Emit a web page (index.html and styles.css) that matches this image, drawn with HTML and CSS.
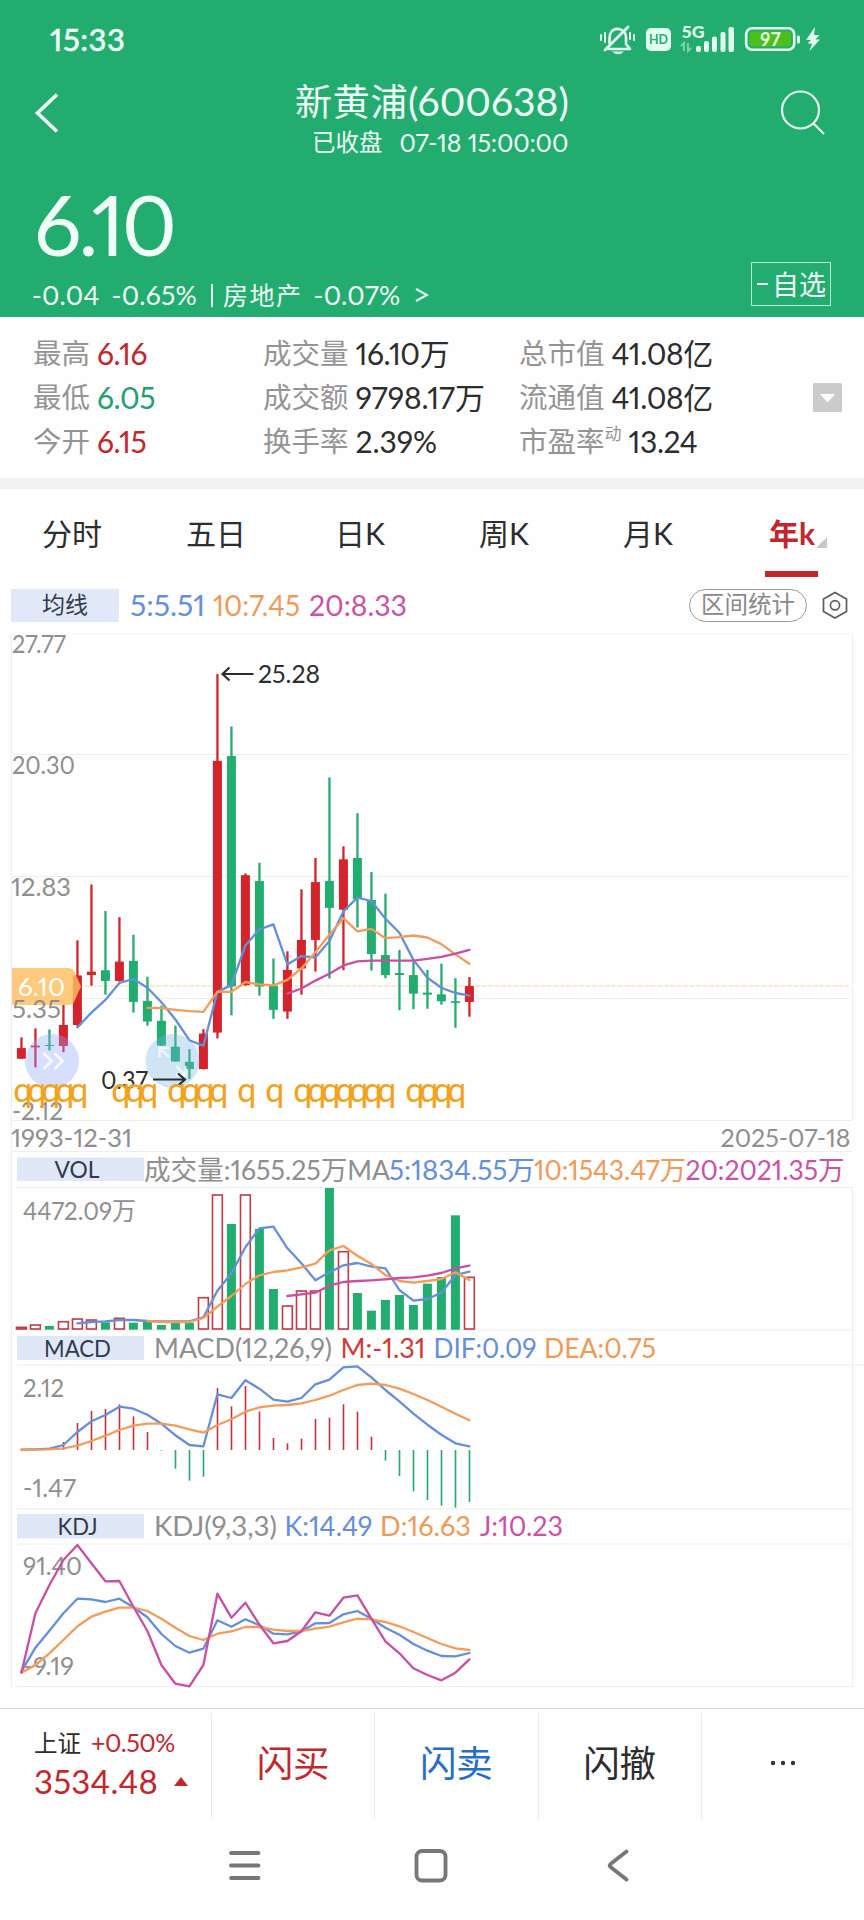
FILE: index.html
```html
<!DOCTYPE html>
<html lang="zh-CN">
<head>
<meta charset="utf-8">
<title>新黄浦(600638)</title>
<link rel="stylesheet" href="styles.css">
</head>
<body>
<header class="header">
  <div class="status">
    <span class="clock">15:33</span>
    <svg class="status-icons" width="224" height="36" viewBox="598 22 224 36">
      <g fill="none" stroke="#e2fff0" stroke-width="2.6" stroke-linecap="round" stroke-linejoin="round">
        <path d="M608 49H630L626 44V37A8.5 8.5 0 0 0 612 31Q609.500 34 609.500 38V43"/>
        <path d="M605 50L628 27" stroke-width="2.8"/>
        <path d="M601 35V40M605 33V42M634 35V40M630 33V39" stroke-width="2"/>
      </g>
      <path d="M612 51.500H624Q618 57 612 51.500Z" fill="#e2fff0"/>
      <rect x="646" y="28" width="25" height="23" rx="5" fill="#e2fff0"/>
      <text x="649" y="44" class="hd" textLength="19" lengthAdjust="spacingAndGlyphs">HD</text>
      <text x="681.500" y="38" class="net" textLength="23" lengthAdjust="spacingAndGlyphs">5G</text>
      <path d="M684 51V43L681 46M688 43V51L691 48" fill="none" stroke="#7fd6ab" stroke-width="1.8"/>
      <g fill="#e2fff0"><rect x="696" y="46" width="5" height="6" rx="2"/><rect x="704" y="41" width="5" height="11" rx="2"/><rect x="712" y="36.500" width="5" height="15.500" rx="2"/><rect x="720.500" y="32" width="5" height="20" rx="2"/><rect x="728.500" y="27" width="5.500" height="25" rx="2"/></g>
      <rect x="746.200" y="28.200" width="48" height="21.600" rx="6" fill="none" stroke="#e2fff0" stroke-width="2.6"/>
      <rect x="749.500" y="31.500" width="41.500" height="15" rx="2.500" fill="#4bbf1b"/>
      <rect x="797" y="35.500" width="3" height="8" rx="1.500" fill="#e2fff0"/>
      <text x="760" y="46" class="batt" textLength="21" lengthAdjust="spacingAndGlyphs">97</text>
      <path d="M815 27L806 40H811L807.500 43.500H812L809.500 51L820 39.500H815.500L819.500 35H814Z" fill="#e2fff0"/>
    </svg>
  </div>
  <div class="titlebar">
    <svg class="back" width="30" height="44" viewBox="32 91 30 44"><path d="M57 94.500L37.500 113L57 131.500" fill="none" stroke="#f0fff8" stroke-width="3.600"/></svg>
    <div class="title">
      <h1>新黄浦<span>(600638)</span></h1>
      <p>已收盘<span>07-18 15:00:00</span></p>
    </div>
    <svg class="search" width="48" height="48" viewBox="778 88 48 48"><g fill="none" stroke="#e4fff2" stroke-width="2.200"><circle cx="800.500" cy="110" r="18.500"/><path d="M813 123L824 134"/></g></svg>
  </div>
  <div class="price">6.10</div>
  <div class="change"><span class="c1">-0.04</span><span class="c2">-0.65%</span><i></i><span class="sector">房地产</span><span class="c3">-0.07%</span><svg width="14" height="16" viewBox="0 0 14 16"><path d="M1 2L12 8L1 14" fill="none" stroke="#e4fff2" stroke-width="2"/></svg></div>
  <button class="watch"><b></b>自选</button>
</header>

<section class="quotes">
  <dl class="col1">
    <div><dt>最高</dt><dd class="up">6.16</dd></div>
    <div><dt>最低</dt><dd class="down">6.05</dd></div>
    <div><dt>今开</dt><dd class="up">6.15</dd></div>
  </dl>
  <dl class="col2">
    <div><dt>成交量</dt><dd>16.10万</dd></div>
    <div><dt>成交额</dt><dd class="wide">9798.17万</dd></div>
    <div><dt>换手率</dt><dd class="wide">2.39%</dd></div>
  </dl>
  <dl class="col3">
    <div><dt>总市值</dt><dd>41.08亿</dd></div>
    <div><dt>流通值</dt><dd>41.08亿</dd></div>
    <div><dt>市盈率<sup>动</sup></dt><dd>13.24</dd></div>
  </dl>
  <svg class="more" width="29" height="29" viewBox="0 0 29 29"><rect width="29" height="29" rx="1.500" fill="#cbcbcb"/><path d="M7 11H22L14.500 19.500Z" fill="#fff"/></svg>
</section>

<nav class="tabs">
  <span>分时</span><span>五日</span><span>日K</span><span>周K</span><span>月K</span>
  <span class="active">年k<svg width="11" height="11" viewBox="0 0 11 11"><path d="M11 0V11H0Z" fill="#c9c9c9"/></svg></span>
</nav>

<div class="legend">
  <span class="tag">均线</span>
  <svg class="ma" width="300" height="42" viewBox="120 585 300 42">
    <text class="t29 blue" x="130" y="615.500" textLength="75" lengthAdjust="spacingAndGlyphs">5:5.51</text>
    <text class="t29 orange" x="213" y="615.500" textLength="87" lengthAdjust="spacingAndGlyphs">10:7.45</text>
    <text class="t29 pink" x="309" y="615.500" textLength="98" lengthAdjust="spacingAndGlyphs">20:8.33</text>
  </svg>
  <span class="pill">区间统计</span>
  <svg class="hex" width="28" height="30" viewBox="821 590 28 30"><g fill="none" stroke="#5c5c5c" stroke-width="1.700"><path d="M835 592.500L846.500 599V611.500L835 618L823.500 611.500V599Z"/><circle cx="835" cy="605.300" r="4.600"/></g></svg>
</div>

<main class="charts">
  <svg class="panel" height="529" viewBox="0 623 864 529">
    <g class="grid"><path d="M11.500 634H849" opacity=".5"/><path d="M11.500 754.500H849M11.500 876.500H849M11.500 998.500H849M11.500 1120.500H852M11.500 1151.500H852M11.500 634V1152M852.500 634V1121"/></g>
    <text class="t25 gray" x="12" y="652.500" textLength="54" lengthAdjust="spacingAndGlyphs">27.77</text>
    <text class="t25 gray" x="12" y="774" textLength="63" lengthAdjust="spacingAndGlyphs">20.30</text>
    <text class="t25 gray" x="11" y="895.500" textLength="60" lengthAdjust="spacingAndGlyphs">12.83</text>
    <path d="M72 986H849" stroke="#f6e3bd" stroke-width="1.500" stroke-dasharray="5 1.500"/>
    <g id="candles"></g>
    <path d="M12 968H68Q73 968 74.500 972L81 986.500L74.500 1001Q73 1005 68 1005H12Z" fill="#ffbe62" opacity=".82"/>
    <text class="t25 white" x="18" y="995.500" textLength="47" lengthAdjust="spacingAndGlyphs">6.10</text>
    <text class="t25 gray" x="12" y="1017.800" textLength="49" lengthAdjust="spacingAndGlyphs">5.35</text>
    <g id="averages" class="line"></g>
    <circle cx="52" cy="1061" r="27" fill="#94a8ff" opacity=".36"/>
    <path d="M43.500 1053L51.500 1061L43.500 1069M54.500 1053L62.500 1061L54.500 1069" fill="none" stroke="#fff" stroke-width="2.600" opacity=".85"/>
    <circle cx="172.500" cy="1061" r="27" fill="#74b4e6" opacity=".34"/>
    <path d="M169 1057L159.500 1048M159.500 1057V1048H169M176 1066L185.500 1075M185.500 1066V1075H176" fill="none" stroke="#fff" stroke-width="2.400" opacity=".7"/>
    <g stroke="#2d2d2d" stroke-width="2.200" fill="none"><path d="M253.500 674H223M229.500 667.500L222.500 674L229.500 680.500M153 1079.500H184.500M178 1073.500L185 1079.500L178 1085.500"/></g>
    <text class="t25 dark" x="258" y="683" textLength="62" lengthAdjust="spacingAndGlyphs">25.28</text>
    <text class="t25 dark" x="101" y="1088.500" textLength="47" lengthAdjust="spacingAndGlyphs">0.37</text>
    <text class="t25 gray" x="12" y="1120" textLength="51" lengthAdjust="spacingAndGlyphs">-2.12</text>
    <g id="events"></g>
    <text class="t25 gray" x="11" y="1146.500" textLength="121" lengthAdjust="spacingAndGlyphs">1993-12-31</text>
    <text class="t25 gray" x="720.500" y="1146.500" textLength="130" lengthAdjust="spacingAndGlyphs">2025-07-18</text>
  </svg>
  <svg class="panel" height="179" viewBox="0 1152 864 179">
    <g class="grid"><path d="M17 1187.500H852M17 1330H852M11.500 1152V1331M852.500 1187V1331"/></g>
    <rect x="17" y="1157.500" width="127" height="23.500" class="tagbg"/>
    <text class="t24 ink" x="54.500" y="1178" textLength="45" lengthAdjust="spacingAndGlyphs">VOL</text>
    <text class="t27 gray" x="144" y="1179.500" textLength="246" lengthAdjust="spacingAndGlyphs">成交量:1655.25万MA</text>
    <text class="t27 blue" x="389" y="1179.500" textLength="146" lengthAdjust="spacingAndGlyphs">5:1834.55万</text>
    <text class="t27 orange" x="534" y="1179.500" textLength="152" lengthAdjust="spacingAndGlyphs">10:1543.47万</text>
    <text class="t27 pink" x="685.500" y="1179.500" textLength="159" lengthAdjust="spacingAndGlyphs">20:2021.35万</text>
    <text class="t25 gray" x="23" y="1220" textLength="113" lengthAdjust="spacingAndGlyphs">4472.09万</text>
    <g id="volume"></g>
    <g id="volume-averages" class="line"></g>
  </svg>
  <svg class="panel" height="179" viewBox="0 1331 864 179">
    <g class="grid"><path d="M17 1365H864M17 1509H852M11.500 1331V1510M852.500 1331V1510"/></g>
    <rect x="17" y="1336" width="127" height="24" class="tagbg"/>
    <text class="t24 ink" x="44" y="1356.700" textLength="67" lengthAdjust="spacingAndGlyphs">MACD</text>
    <text class="t27 gray" x="154" y="1358" textLength="178" lengthAdjust="spacingAndGlyphs">MACD(12,26,9)</text>
    <text class="t27 red" x="340.500" y="1358" textLength="85" lengthAdjust="spacingAndGlyphs">M:-1.31</text>
    <text class="t27 blue" x="433.500" y="1358" textLength="103" lengthAdjust="spacingAndGlyphs">DIF:0.09</text>
    <text class="t27 orange" x="544" y="1358" textLength="112" lengthAdjust="spacingAndGlyphs">DEA:0.75</text>
    <text class="t25 gray" x="23" y="1396.700" textLength="41" lengthAdjust="spacingAndGlyphs">2.12</text>
    <text class="t25 gray" x="23" y="1496.500" textLength="53" lengthAdjust="spacingAndGlyphs">-1.47</text>
    <g id="macd"></g>
    <g id="macd-lines" class="line"></g>
  </svg>
  <svg class="panel" height="198" viewBox="0 1510 864 198">
    <g class="grid"><path d="M17 1544H852M17 1686.500H852M11.500 1510V1687M852.500 1510V1687"/></g>
    <rect x="17" y="1514" width="127" height="24.500" class="tagbg"/>
    <text class="t24 ink" x="57.500" y="1534.500" textLength="40" lengthAdjust="spacingAndGlyphs">KDJ</text>
    <text class="t27 gray" x="154" y="1536" textLength="123" lengthAdjust="spacingAndGlyphs">KDJ(9,3,3)</text>
    <text class="t27 blue" x="284.500" y="1536" textLength="88" lengthAdjust="spacingAndGlyphs">K:14.49</text>
    <text class="t27 orange" x="380" y="1536" textLength="91" lengthAdjust="spacingAndGlyphs">D:16.63</text>
    <text class="t27 pink" x="480" y="1536" textLength="83" lengthAdjust="spacingAndGlyphs">J:10.23</text>
    <text class="t25 gray" x="23" y="1575" textLength="59" lengthAdjust="spacingAndGlyphs">91.40</text>
    <text class="t25 gray" x="24" y="1674.500" textLength="50" lengthAdjust="spacingAndGlyphs">-9.19</text>
    <g id="kdj" class="line"></g>
  </svg>
</main>

<footer class="actions">
  <div class="index">
    <p>上证<span>+0.50%</span></p>
    <strong>3534.48<svg width="14" height="9" viewBox="0 0 14 9"><path d="M7 0L14 9H0Z" fill="#c2272d"/></svg></strong>
  </div>
  <div class="act red">闪买</div>
  <div class="act sell">闪卖</div>
  <div class="act">闪撤</div>
  <div class="act"><svg width="28" height="6" viewBox="0 0 28 6"><g fill="#333"><circle cx="4" cy="3" r="2.200"/><circle cx="14" cy="3" r="2.200"/><circle cx="24" cy="3" r="2.200"/></g></svg></div>
</footer>
<div class="sysnav">
  <svg width="864" height="50" viewBox="0 1840 864 50"><g fill="none" stroke="#777" stroke-width="3.800" stroke-linecap="round" stroke-linejoin="round"><path d="M231 1853H258.500M231 1865.500H258.500M231 1878H258.500"/><rect x="416.500" y="1851" width="29" height="29.500" rx="5.500"/><path d="M626.500 1851.500L610.500 1864Q609 1865.500 610.500 1867L626.500 1879.500"/></g></svg>
</div>
<script src="chart.js"></script>
</body>
</html>
```
FILE: styles.css
```css
* { box-sizing: border-box; margin: 0; padding: 0; }
body {
  width: 864px; height: 1920px; overflow: hidden;
  background: #fefefe; color: #2d2d2d;
  font-family: Lato, "Noto Sans CJK SC", sans-serif;
  font-variant-numeric: proportional-nums;
}
svg { display: block; flex: none; }

.header { position: relative; height: 317px; background: #23ac6f; color: #effff7; }
.status { display: flex; justify-content: space-between; padding: 22px 42px 0 50px; height: 58px; }
.clock { font-size: 31px; line-height: 34px; font-weight: 500; letter-spacing: .5px; -webkit-text-stroke: .4px #effff7; }
.hd { font: 700 14px Lato, sans-serif; fill: #23ac6f; }
.net { font: 900 16px Lato, sans-serif; fill: #e2fff0; }
.batt { font: 700 19px Lato, sans-serif; fill: #e6ffe0; }
.titlebar { display: flex; height: 110px; padding: 0 38px 0 32px; }
.back { margin-top: 33px; }
.title { flex: 1; padding-left: 233px; }
.title h1 { height: 60px; padding-top: 15px; font-size: 37px; font-weight: 400; line-height: 56px; white-space: nowrap; letter-spacing: .7px; }
.title h1 span { font-size: 39px; letter-spacing: 0; }
.title p { display: flex; padding-left: 17px; padding-top: 8px; font-size: 23.500px; line-height: 32px; white-space: nowrap; }
.title p span { margin-left: 17px; font-size: 25px; letter-spacing: -.15px; }
.search { margin-top: 30px; }
.price { height: 110px; padding-left: 34px; font-size: 84px; line-height: 111px; letter-spacing: -3px; }
.change { display: flex; align-items: center; height: 34px; padding-left: 32px; font-size: 26.500px; line-height: 34px; white-space: nowrap; letter-spacing: .25px; }
.change .c2 { margin-left: 12px; }
.change i { width: 2px; height: 23px; margin: 0 10px 0 14px; background: #e4fff2; }
.change .sector { font-size: 25px; letter-spacing: 1.500px; }
.change .c3 { margin-left: 11px; }
.change svg { margin-left: 14px; }
.watch {
  position: absolute; left: 751px; top: 262px; width: 80px; height: 44px;
  display: flex; align-items: center; gap: 4px; padding-left: 5px;
  border: 1px solid #b8e8cf; background: none; color: #effff7;
  font-family: "Noto Sans CJK SC", sans-serif; font-size: 27px; line-height: 40px; white-space: nowrap;
}
.watch b { width: 11px; height: 2.500px; background: #effff7; flex: none; }

.quotes { display: flex; height: 172px; padding: 14px 22px 0 33px; border-bottom: 11px solid #f1f1f1; }
.quotes dl > div { display: flex; height: 44px; line-height: 44px; font-size: 28.500px; white-space: nowrap; }
.col1 { width: 230px; }
.col2 { width: 256px; }
.col3 { width: 294px; }
.quotes dt { color: #949494; }
.quotes dd { margin-left: 7px; font-size: 30px; letter-spacing: -.4px; }
.quotes dd.wide { letter-spacing: -.05px; }
.quotes dd.up, .red { color: #c2272d; }
.quotes dd.down { color: #23a06f; }
.quotes sup { font-size: 17px; line-height: 0; vertical-align: 12px; }
.more { margin-top: 52px; }

.tabs { display: flex; height: 99px; }
.tabs span { position: relative; flex: 1; display: flex; justify-content: center; padding-top: 22px; font-size: 30px; line-height: 44px; }
.tabs .active { color: #c2272d; font-weight: 700; }
.tabs .active::after { content: ""; position: absolute; left: 45px; top: 82px; width: 53px; height: 6px; background: #c2272d; }
.tabs .active svg { position: absolute; left: 96px; top: 48px; }

.legend { display: flex; align-items: flex-start; height: 35px; padding: 1px 0 0 11px; }
.tag { width: 108px; height: 33px; margin-right: 1px; background: #e1e9f8; color: #333a4c; text-align: center; font-size: 23px; line-height: 31px; }
.ma { margin-top: -4px; }
.pill { width: 118px; height: 33px; margin-left: 269px; border: 1px solid #999; border-radius: 17px; color: #888; text-align: center; font-size: 23.500px; line-height: 29px; white-space: nowrap; }
.ma + .pill { margin-left: 269px; }
.hex { margin: 1px 0 0 14px; }

.panel { width: 864px; }
.grid { fill: none; stroke: #eee; stroke-width: 1; }
.line path { fill: none; stroke-width: 2.3; stroke-linejoin: round; stroke-linecap: round; }
.t24, .t25, .t27, .t29 { font-family: Lato, "Noto Sans CJK SC", sans-serif; }
.t24 { font-size: 24px; }
.t25 { font-size: 25px; }
.t27 { font-size: 27px; }
.t29 { font-size: 29px; }
.gray { fill: #8f8f8f; }
.dark { fill: #2d2d2d; }
.ink { fill: #333a4c; }
.white { fill: #fff; }
.blue { fill: #648fd9; }
.orange { fill: #ee9a58; }
.pink { fill: #cc50a8; }
text.red { fill: #d13b34; }
.tagbg { fill: #e0e8f8; }
.event { font: 34px Lato, sans-serif; fill: #f2a21c; }

.actions { display: flex; height: 117px; border-top: 1px solid #d4d4d4; padding-top: 4px; }
.index { width: 211px; padding: 12px 0 0 34px; }
.index p { height: 36px; font-size: 23.500px; line-height: 34px; white-space: nowrap; }
.index p span { margin-left: 10px; color: #c2272d; font-size: 25px; letter-spacing: -.5px; }
.index strong { display: flex; align-items: center; color: #c2272d; font-size: 33px; font-weight: 400; line-height: 40px; letter-spacing: .2px; }
.index svg { margin-left: 16px; }
.act { flex: 1; display: flex; align-items: center; justify-content: center; height: 106px; border-left: 1px solid #ebebeb; font-size: 36.500px; padding-bottom: 10px; }
.act svg { margin-top: 4px; }
.act.sell { color: #246fc4; }
.sysnav { padding-top: 15px; }
```
FILE: chart.js
```javascript
const NS = 'http://www.w3.org/2000/svg';
const X0 = 21.4, STEP = 14;
const RED = '#d3232b', GREEN = '#23ac6f';
const BLUE = '#648fd9', ORANGE = '#f39c59', PINK = '#c94fa3';

const x = i => X0 + STEP * i;

function add(parent, name, attrs) {
  const el = document.createElementNS(NS, name);
  for (const key in attrs) el.setAttribute(key, attrs[key]);
  document.getElementById(parent).appendChild(el);
  return el;
}

function line(parent, start, values, color, y) {
  const d = values.map((v, i) => (i ? 'L' : 'M') + x(start + i).toFixed(1) + ' ' + y(v).toFixed(1)).join('');
  add(parent, 'path', { d, stroke: color });
}

// Candles: direction, high, body top, body bottom, low
const candles = [
  ['r',1212,1243,1274,1274],['r',1186,1236,1241,1299],['g',1189,1234,1237,1250],['r',1118,1176,1237,1255],
  ['r',930,1032,1176,1180],['r',768,1021,1031,1062],['g',845,1017,1048,1088],['r',863,992,1048,1050],
  ['g',914,990,1109,1140],['g',1036,1106,1166,1178],['g',1120,1164,1236,1236],['g',1178,1239,1282,1282],
  ['g',1246,1283,1304,1333],['r',1188,1201,1304,1305],['r',157,409,1198,1215],['g',309,395,1064,1148],
  ['r',736,741,1060,1062],['g',705,758,1064,1091],['g',983,1062,1132,1158],['r',962,1016,1137,1158],
  ['r',782,929,1012,1088],['r',691,761,929,1021],['g',457,758,836,1041],['r',657,695,841,1017],
  ['g',561,691,810,893],['g',732,813,970,1018],['g',795,973,1031,1040],['g',958,1025,1031,1133],
  ['g',993,1031,1085,1130],['g',1016,1082,1088,1129],['g',998,1087,1107,1117],['g',1040,1107,1112,1184],
  ['r',1037,1063,1109,1152]
];
const py = v => 620 + v / 2.9037;
candles.forEach(([dir, hi, top, bottom, lo], i) => {
  const fill = dir === 'r' ? RED : GREEN;
  add('candles', 'rect', { x: x(i) - 1.1, y: py(hi), width: 2.3, height: py(lo) - py(hi), fill });
  add('candles', 'rect', { x: x(i) - 4.5, y: py(top), width: 9, height: py(bottom) - py(top), fill });
});
line('averages', 4, [1183,1140,1103,1054,1042,1068,1110,1160,1220,1236,1080,1060,945,898,884,1000,976,980,932,846,806,816,867,908,987,1039,1068,1083,1091], BLUE, py);
line('averages', 9, [1126,1127,1132,1136,1138,1079,1080,1051,1058,1061,1045,1012,965,914,866,904,897,924,921,916,922,941,971,998], ORANGE, py);
line('averages', 19, [1085,1070,1047,1027,1003,991,989,989,989,989,984,978,969,958], PINK, py);

[0,1,2,3,4,7,8,9,11,12,13,14,16,18,20,21,22,23,24,25,26,28,29,30,31].forEach(i => {
  const t = add('events', 'text', { class: 'event', x: x(i) - 8.2, y: 1102, textLength: 19, lengthAdjust: 'spacingAndGlyphs' });
  t.textContent = 'q';
});

const volume = [740,733,738,723,715,718,727,713,728,725,735,728,728,651,343,432,343,447,627,676,631,631,324,513,639,692,660,645,675,611,591,406,590];
const volumeDir = 'rrgrrrgrgggggrrgrggrrrgrggggggggr';
const vy = v => 1080 + v / 3;
volume.forEach((v, i) => {
  const y = vy(v), h = 1329.7 - y;
  if (volumeDir[i] === 'g') add('volume', 'rect', { x: x(i) - 4.5, y, width: 9, height: h, fill: GREEN });
  else add('volume', 'rect', { x: x(i) - 4.9, y: y + .7, width: 9.8, height: h - 1.4, fill: 'none', stroke: '#c23a43', 'stroke-width': 1.6 });
});
line('volume-averages', 4, [730,726,724,720,720,723,724,724,724,712,632,580,502,445,440,505,550,601,577,556,549,560,565,630,662,657,638,585,575], BLUE, vy);
line('volume-averages', 9, [723,726,726,726,714,680,648,612,586,576,571,562,551,511,498,527,552,585,603,608,603,597,577,600], ORANGE, vy);
line('volume-averages', 19, [648,643,638,617,606,603,601,598,594,592,587,579,565,557], PINK, vy);

const my = v => 1330 + v / 3;
[336,279,243,237,223,259,306,362,416,452,440,174,229,168,245,324,340,326,267,263,223,245,320,392,438,484,510,527,533,516].forEach((v, n) => {
  const top = Math.min(v, 360), bottom = Math.max(v, 360);
  add('macd', 'rect', { x: x(n + 3) - .7, y: my(top), width: 1.6, height: my(bottom) - my(top), fill: v > 360 ? GREEN : '#c6303c' });
});
line('macd-lines', 0, [359,358,356,345,306,274,255,230,236,254,281,316,345,349,193,204,151,176,209,215,204,163,149,112,109,142,180,214,251,284,314,340,349], BLUE, my);
line('macd-lines', 0, [360,359,358,355,347,333,317,300,287,281,281,287,298,308,285,268,245,232,227,225,220,210,197,180,165,161,165,176,192,210,230,251,271], ORANGE, my);

line('kdj', 0, [1025,953,902,850,806,808,816,806,832,862,912,948,968,956,871,890,868,886,911,913,904,880,879,853,843,866,893,914,942,962,978,979,969], BLUE, my);
line('kdj', 0, [1028,1005,970,930,889,860,845,833,833,843,866,893,918,930,911,904,891,891,899,903,903,896,890,877,866,868,876,889,906,924,942,955,960], ORANGE, my);
line('kdj', 0, [1028,850,765,690,645,700,754,753,830,903,1005,1061,1069,1005,791,863,818,884,940,933,904,847,857,803,796,866,934,970,1015,1035,1051,1028,988], PINK, my);
```
